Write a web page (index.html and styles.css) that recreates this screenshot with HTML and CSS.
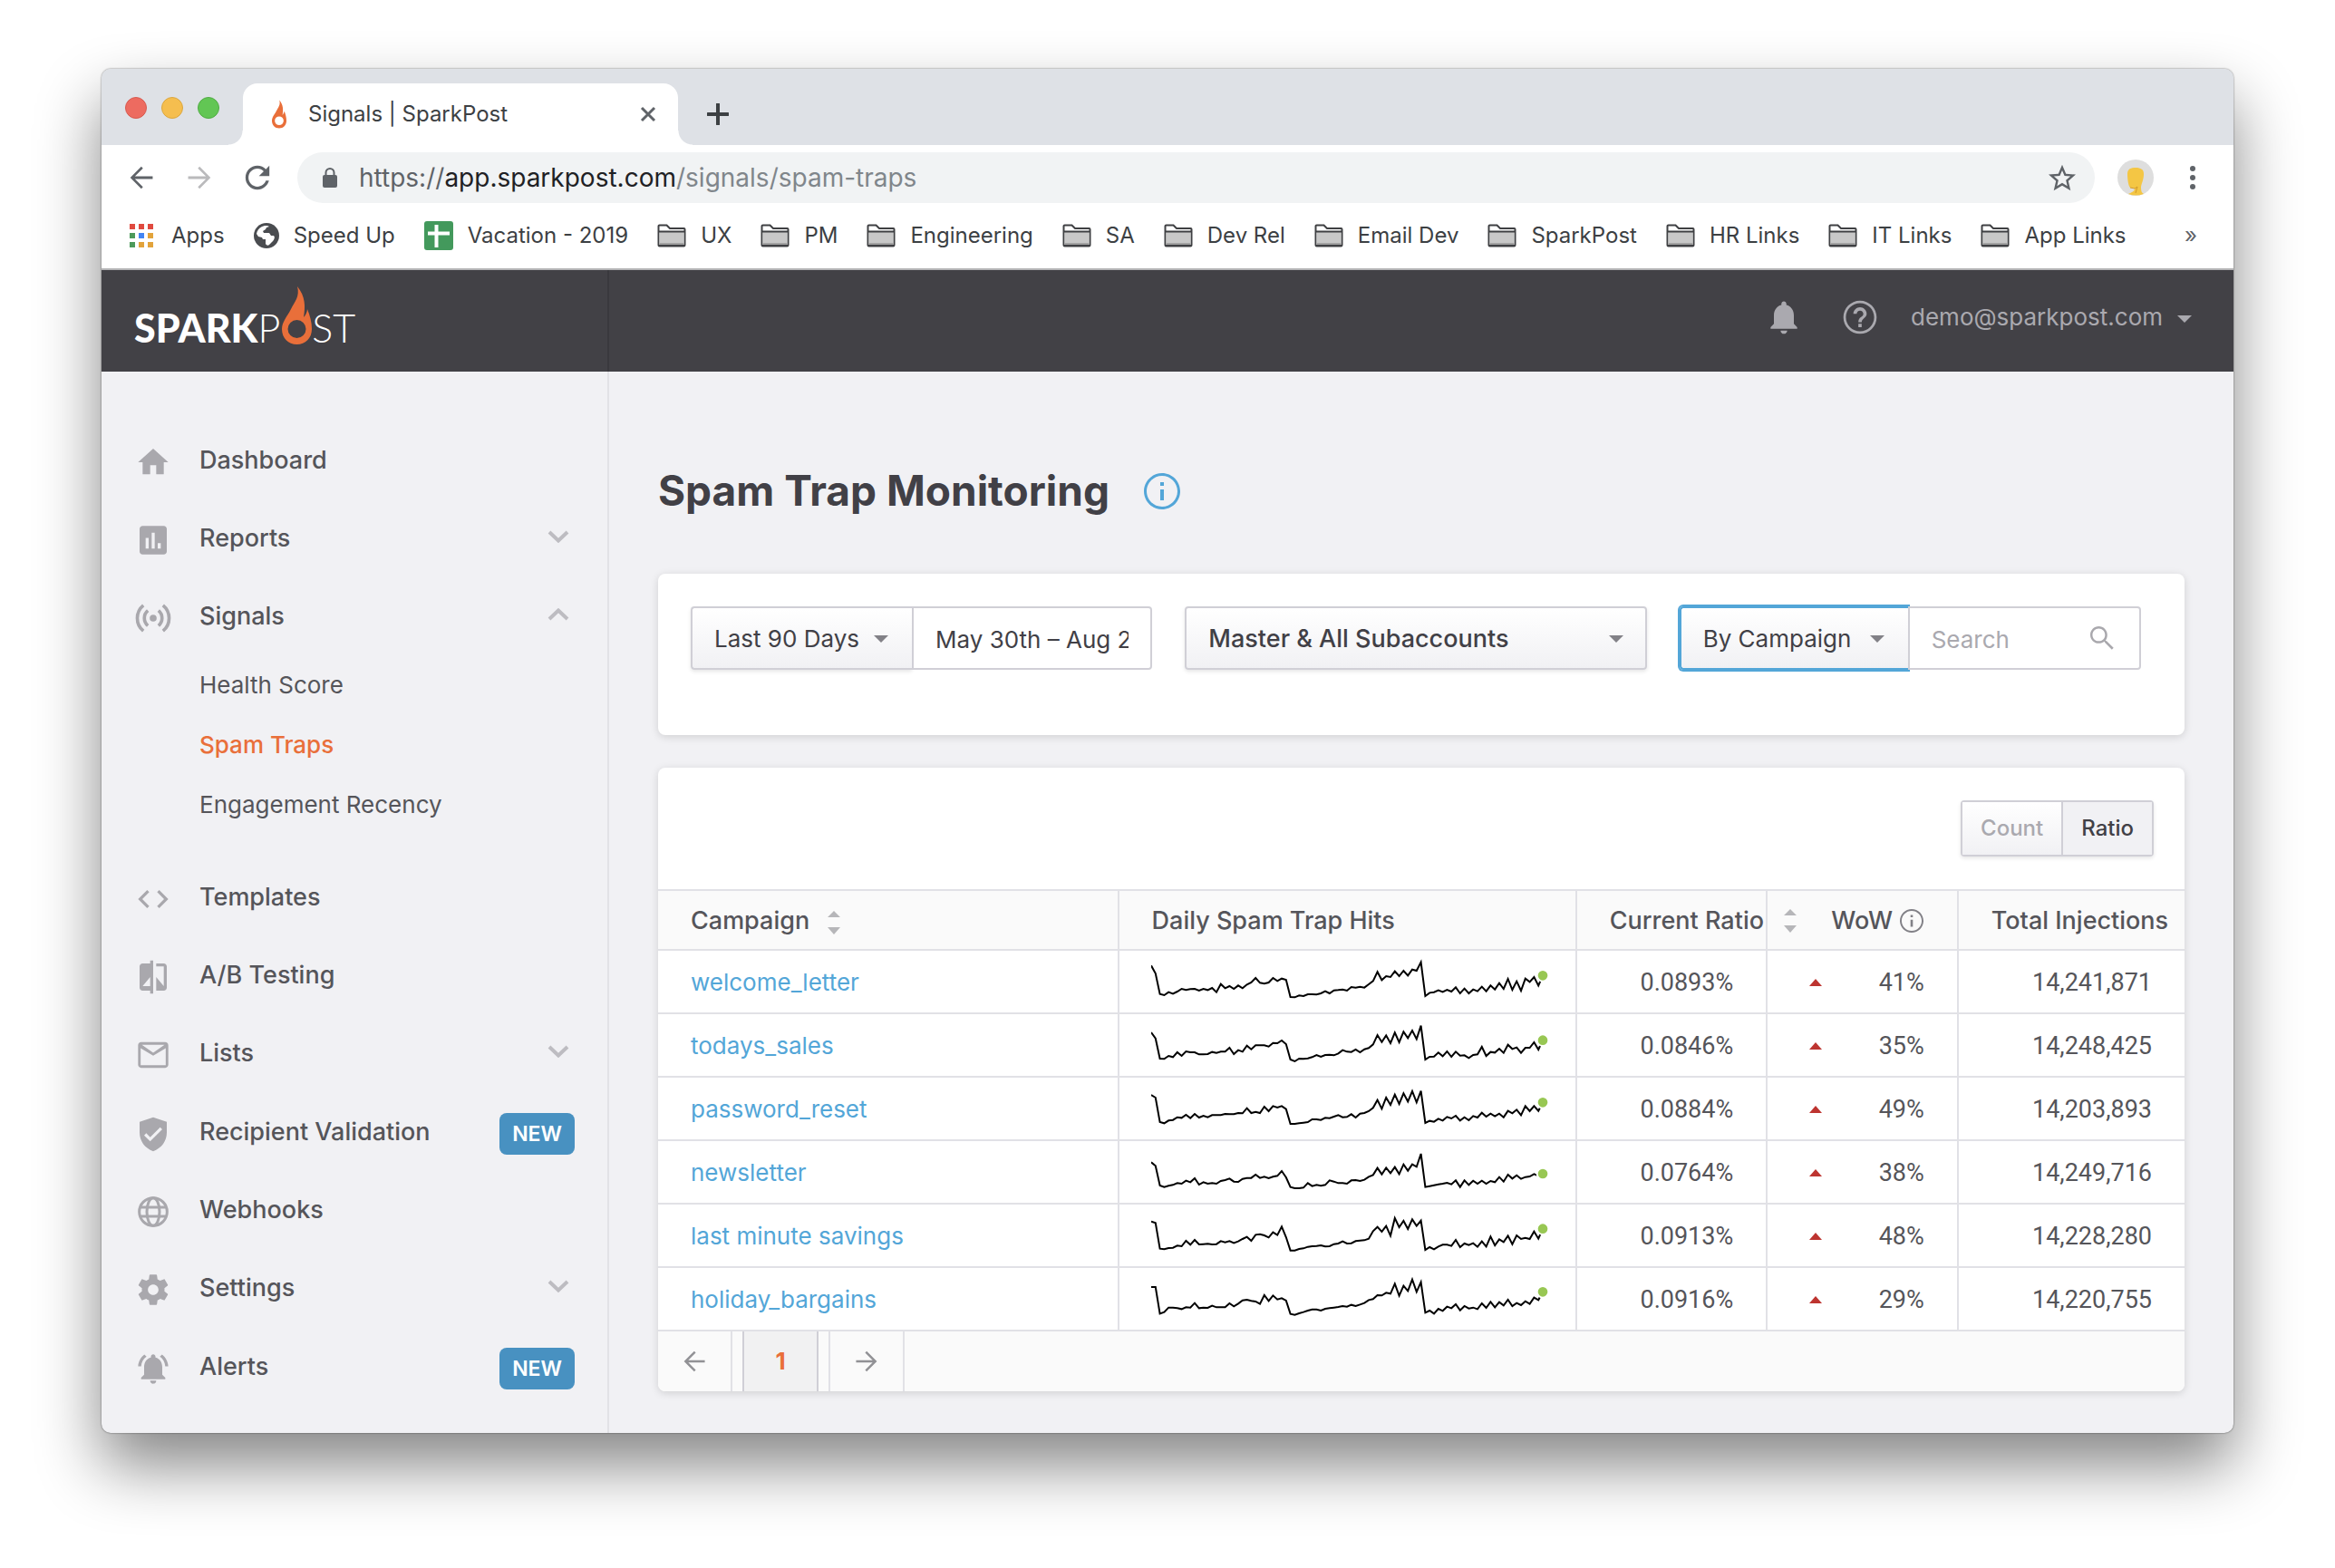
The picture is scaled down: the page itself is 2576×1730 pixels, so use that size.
FILE: index.html
```html
<!DOCTYPE html>
<html lang="en">
<head>
<meta charset="utf-8">
<title>Signals | SparkPost</title>
<link rel="stylesheet" href="styles.css">
</head>
<body>
<svg class="sprite" aria-hidden="true">
  <symbol id="flame" viewBox="0 0 33 64"><path fill-rule="evenodd" d="M17 0C26 11 26 22 24 34C26 32 28 28 28 25C31 32 33 40 33 47C33 57 26 64 16.500 64C7 64 0 57 0 47C0 39 6 33 10 25C14 17 20 11 17 0ZM16.500 37A10 10 0 1 0 16.500 57A10 10 0 1 0 16.500 37Z"/></symbol>
  <symbol id="folder" viewBox="0 0 32 26"><path d="M1.500 23.500V2.500a1 1 0 0 1 1-1h8l3.500 3.500h15.500a1 1 0 0 1 1 1v17.500a1 1 0 0 1-1 1h-27a1 1 0 0 1-1-1z" fill="#fff" stroke="#3f4043" stroke-width="2"/><path d="M2.500 9h27v14h-27z" fill="#c8c8c8"/><path d="M2.500 21h27v2h-27z" fill="#a2a2a2"/><path d="M2 8.500h28M2 24h28" stroke="#3f4043" stroke-width="2"/></symbol>
  <symbol id="caret" viewBox="0 0 16 8"><path d="M0 0h16L8 8z"/></symbol>
  <symbol id="sort" viewBox="0 0 14 26"><path d="M7 0l7 7H0zM0 18h14l-7 8z"/></symbol>
  <symbol id="up" viewBox="0 0 14 8"><path d="M7 0l7 8H0z"/></symbol>
  <symbol id="chevron" viewBox="0 0 24 14"><path d="M2 2l10 9.500L22 2" fill="none" stroke="#bdbcc1" stroke-width="4"/></symbol>
  <symbol id="info" viewBox="2 2 20 20"><path d="M11 17h2v-6h-2v6zm1-15C6.480 2 2 6.480 2 12s4.480 10 10 10 10-4.480 10-10S17.520 2 12 2zm0 18.500c-4.700 0-8.500-3.800-8.500-8.500s3.800-8.500 8.500-8.500 8.500 3.800 8.500 8.500-3.800 8.500-8.500 8.500zM11 9h2V7h-2v2z"/></symbol>
  <symbol id="arrow" viewBox="3 3 18 18"><path d="M20 11.100H7.400l5.700-5.700L11.900 4.200l-7.800 7.800 7.800 7.800 1.200-1.200L7.400 12.900H20z"/></symbol>
</svg>

<div class="window">
  <div class="tabstrip">
    <div class="lights"><i class="light red"></i><i class="light yellow"></i><i class="light green"></i></div>
    <div class="tab">
      <svg class="favicon"><use href="#flame"/></svg>
      <span class="tab-title">Signals | SparkPost</span>
      <button class="tab-close" aria-label="Close tab"><svg width="18" height="18" viewBox="0 0 18 18"><path d="M2 2l14 14M16 2L2 16" stroke="#5f6368" stroke-width="3"/></svg></button>
    </div>
    <button class="new-tab" aria-label="New tab"><svg width="24" height="24" viewBox="0 0 24 24"><path d="M12 1v22M1 12h22" stroke="#3c4043" stroke-width="4" stroke-linecap="round"/></svg></button>
  </div>

  <div class="toolbar">
    <button aria-label="Back"><svg class="tool-icon" fill="#5f6368"><use href="#arrow"/></svg></button>
    <button aria-label="Forward"><svg class="tool-icon flip" fill="#bababc"><use href="#arrow"/></svg></button>
    <button aria-label="Reload"><svg width="28" height="28" viewBox="3.500 3.500 17 17" fill="#5f6368"><path d="M17.650 6.350C16.200 4.900 14.210 4 12 4c-4.420 0-7.990 3.580-7.990 8s3.570 8 7.990 8c3.730 0 6.840-2.550 7.730-6h-2.080c-.82 2.330-3.040 4-5.650 4-3.310 0-6-2.690-6-6s2.690-6 6-6c1.660 0 3.140.69 4.220 1.780L13 11h7V4l-2.350 2.350z"/></svg></button>
    <div class="omnibox">
      <svg width="16" height="22" viewBox="0 0 16 22"><rect y="8" width="16" height="14" rx="2" fill="#5f6368"/><path d="M3.500 9V5.500a4.500 4.500 0 0 1 9 0V9" fill="none" stroke="#5f6368" stroke-width="2"/></svg>
      <span class="url">https://<b>app.sparkpost.com</b><i>/signals/spam-traps</i></span>
      <button class="star" aria-label="Bookmark this page"><svg width="30" height="30" viewBox="2 1.500 20 20" fill="#5f6368"><path d="M22 9.240l-7.190-.62L12 2 9.190 8.630 2 9.240l5.460 4.730L5.820 21 12 17.270 18.180 21l-1.630-7.030L22 9.240zM12 15.400l-3.760 2.270 1-4.280-3.320-2.880 4.380-.38L12 6.100l1.710 4.040 4.380.38-3.320 2.880 1 4.280L12 15.400z"/></svg></button>
    </div>
    <button class="avatar" aria-label="Profile"><svg width="40" height="40" viewBox="0 0 40 40"><circle cx="20" cy="20" r="20" fill="#dedede"/><path d="M11 16C11 10 15 9 20 9C26 9 29 11 29 16C29 23 26 27 26 31C26 35 27 37 29 38Q20 41 12 38C16 36 19 35 19 32L14 31C12 29 11 22 11 16Z" fill="#f4c644"/><path d="M14 31l5 1 3-2-2 7" fill="none" stroke="#d39a2c" stroke-width="1"/></svg></button>
    <button aria-label="Menu"><svg width="6" height="26" viewBox="0 0 6 26" fill="#5f6368"><circle cx="3" cy="3" r="3"/><circle cx="3" cy="13" r="3"/><circle cx="3" cy="23" r="3"/></svg></button>
  </div>

  <nav class="bookmarks" aria-label="Bookmarks">
    <a href="#" class="apps"><svg width="26" height="26" viewBox="0 0 26 26"><path d="M0 0h6v6H0zM10 0h6v6h-6zM20 0h6v6h-6z" fill="#e04a3f"/><path d="M0 10h6v6H0zM0 20h6v6H0z" fill="#4d9a5b"/><path d="M10 20h6v6h-6zM20 20h6v6h-6zM20 10h6v6h-6z" fill="#e2a33b"/><path d="M10 10h6v6h-6z" fill="#4285f4"/></svg>Apps</a>
    <a href="#"><svg width="28" height="28" viewBox="0 0 28 28"><circle cx="14" cy="14" r="14" fill="#4a4c50"/><path d="M12 3c-5 1-8 4-9 9l2 3 4 1 1 2h3v5c1 2 3 2 4 1l3-3c2-2 4-5 2-7h-3l-2-3h-6l-1-2 3-2 1-2 3-1-2-1z" fill="#fff"/></svg>Speed Up</a>
    <a href="#"><svg width="32" height="32" viewBox="0 0 32 32"><rect width="32" height="32" rx="3" fill="#43995c"/><path d="M13.500 4v25M4 13.500h24" stroke="#fff" stroke-width="4"/></svg>Vacation - 2019</a>
    <a href="#"><svg class="folder"><use href="#folder"/></svg>UX</a>
    <a href="#"><svg class="folder"><use href="#folder"/></svg>PM</a>
    <a href="#"><svg class="folder"><use href="#folder"/></svg>Engineering</a>
    <a href="#"><svg class="folder"><use href="#folder"/></svg>SA</a>
    <a href="#"><svg class="folder"><use href="#folder"/></svg>Dev Rel</a>
    <a href="#"><svg class="folder"><use href="#folder"/></svg>Email Dev</a>
    <a href="#"><svg class="folder"><use href="#folder"/></svg>SparkPost</a>
    <a href="#"><svg class="folder"><use href="#folder"/></svg>HR Links</a>
    <a href="#"><svg class="folder"><use href="#folder"/></svg>IT Links</a>
    <a href="#"><svg class="folder"><use href="#folder"/></svg>App Links</a>
    <button class="more" aria-label="More bookmarks">»</button>
  </nav>

  <header class="topbar">
    <a href="#" class="brand" aria-label="SparkPost"><span class="brand-bold">SPARK</span><span class="brand-thin">P</span><svg class="brand-flame"><use href="#flame"/></svg><span class="brand-thin">ST</span></a>
    <div class="account">
      <button class="bell" aria-label="Notifications"><svg width="44" height="44" viewBox="0 0 24 24" fill="#aaa9af"><path d="M12 22c1.100 0 2-.9 2-2h-4c0 1.100.89 2 2 2zm6-6v-5c0-3.070-1.640-5.640-4.500-6.320V4c0-.83-.67-1.500-1.500-1.500s-1.500.67-1.500 1.500v.68C7.630 5.360 6 7.920 6 11v5l-2 2v1h16v-1l-2-2z"/></svg></button>
      <button aria-label="Help"><svg width="44" height="44" viewBox="0 0 24 24" fill="#aaa9af"><path d="M11 18h2v-2h-2v2zm1-16C6.480 2 2 6.480 2 12s4.480 10 10 10 10-4.480 10-10S17.520 2 12 2zm0 18.500c-4.700 0-8.500-3.800-8.500-8.500s3.800-8.500 8.500-8.500 8.500 3.800 8.500 8.500-3.800 8.500-8.500 8.500zm0-14.500c-2.210 0-4 1.790-4 4h2c0-1.100.9-2 2-2s2 .9 2 2c0 2-3 1.750-3 5h2c0-2.250 3-2.500 3-5 0-2.210-1.790-4-4-4z"/></svg></button>
      <button class="user">demo@sparkpost.com<svg class="caret"><use href="#caret"/></svg></button>
    </div>
  </header>

  <div class="app">
    <nav class="sidebar" aria-label="Main">
      <a href="#" class="nav-item"><svg class="nav-icon" viewBox="0 0 24 24"><path d="M10 20v-6h4v6h5v-8h3L12 3 2 12h3v8z"/></svg><span>Dashboard</span></a>
      <a href="#" class="nav-item"><svg class="nav-icon" viewBox="0 0 24 24"><path d="M19 2.500H5c-1.100 0-2 .9-2 2v15c0 1.100.9 2 2 2h14c1.100 0 2-.9 2-2v-15c0-1.100-.9-2-2-2zM9 17.500H7v-7h2v7zm4 0h-2V7h2v10.500zm4 0h-2V14h2v3.500z"/></svg><span>Reports</span><svg class="chevron"><use href="#chevron"/></svg></a>
      <a href="#" class="nav-item"><svg class="nav-icon" viewBox="0 0 24 24"><circle cx="12" cy="12" r="2.300"/><path d="M5.500 3.500a11 11 0 0 0 0 17M18.500 3.500a11 11 0 0 1 0 17M8.500 7a6.500 6.500 0 0 0 0 10M15.500 7a6.500 6.500 0 0 1 0 10" fill="none" stroke="#a9a8ad" stroke-width="2.200"/></svg><span>Signals</span><svg class="chevron open"><use href="#chevron"/></svg></a>
      <div class="sub-nav">
        <a href="#">Health Score</a>
        <a href="#" class="active" aria-current="page">Spam Traps</a>
        <a href="#">Engagement Recency</a>
      </div>
      <a href="#" class="nav-item"><svg class="nav-icon" viewBox="0 0 24 24"><path d="M9.400 16.600L4.800 12l4.600-4.600L8 6l-6 6 6 6 1.400-1.400zm5.200 0l4.600-4.600-4.600-4.600L16 6l6 6-6 6-1.400-1.400z"/></svg><span>Templates</span></a>
      <a href="#" class="nav-item"><svg class="nav-icon" viewBox="0 0 24 24"><path d="M10 3H5c-1.100 0-2 .9-2 2v14c0 1.100.9 2 2 2h5v2h2V1h-2v2zm0 15H5l5-6v6zm9-15h-5v2h5v13l-5-6v9h5c1.100 0 2-.9 2-2V5c0-1.100-.9-2-2-2z"/></svg><span>A/B Testing</span></a>
      <a href="#" class="nav-item"><svg class="nav-icon" viewBox="0 0 24 24"><path fill-rule="evenodd" d="M20 3.500H4c-1.100 0-2 .9-2 2v13c0 1.100.9 2 2 2h16c1.100 0 2-.9 2-2v-13c0-1.100-.9-2-2-2zm.3 15.300H3.700V7.500l8.300 4.900 8.300-4.900zM12 10.500L4.500 5.300h15z"/></svg><span>Lists</span><svg class="chevron"><use href="#chevron"/></svg></a>
      <a href="#" class="nav-item has-badge"><svg class="nav-icon" viewBox="0 0 24 24"><path fill-rule="evenodd" d="M12 1l9 3v7c0 6-3.500 10.500-9 12.500C6.500 21.500 3 17 3 11V4zm-2 16l8-8-1.400-1.400-6.600 6.600-2.600-2.600L6 13z"/></svg><span>Recipient Validation</span><em class="badge">NEW</em></a>
      <a href="#" class="nav-item"><svg class="nav-icon" viewBox="0 0 24 24"><g fill="none" stroke="#a9a8ad" stroke-width="1.800"><circle cx="12" cy="12" r="9.200"/><ellipse cx="12" cy="12" rx="4.200" ry="9.200"/><path d="M3.500 9h17M3.500 15h17"/></g></svg><span>Webhooks</span></a>
      <a href="#" class="nav-item"><svg class="nav-icon" viewBox="0 0 24 24"><path d="M19.430 12.980c.04-.32.07-.64.07-.98s-.03-.66-.07-.98l2.110-1.650c.19-.15.24-.42.12-.64l-2-3.460c-.12-.22-.39-.3-.61-.22l-2.490 1c-.52-.4-1.080-.73-1.690-.98l-.38-2.650C14.460 2.180 14.250 2 14 2h-4c-.25 0-.46.18-.49.42l-.38 2.650c-.61.25-1.170.59-1.690.98l-2.490-1c-.23-.09-.49 0-.61.22l-2 3.460c-.13.22-.07.49.12.64l2.110 1.650c-.04.32-.07.65-.07.98s.03.66.07.98l-2.110 1.650c-.19.15-.24.42-.12.64l2 3.460c.12.22.39.3.61.22l2.490-1c.52.4 1.080.73 1.690.98l.38 2.650c.03.24.24.42.49.42h4c.25 0 .46-.18.49-.42l.38-2.650c.61-.25 1.170-.59 1.690-.98l2.490 1c.23.09.49 0 .61-.22l2-3.460c.12-.22.07-.49-.12-.64l-2.110-1.650zM12 15.500c-1.930 0-3.500-1.570-3.500-3.500s1.570-3.500 3.500-3.500 3.500 1.570 3.500 3.500-1.570 3.500-3.500 3.500z"/></svg><span>Settings</span><svg class="chevron"><use href="#chevron"/></svg></a>
      <a href="#" class="nav-item has-badge"><svg class="nav-icon" viewBox="0 0 24 24"><path d="M7.580 4.080L6.150 2.650C3.750 4.480 2.170 7.300 2.030 10.500h2c.15-2.650 1.510-4.970 3.550-6.420zm12.390 6.420h2c-.15-3.200-1.730-6.020-4.120-7.850l-1.420 1.430c2.020 1.450 3.390 3.770 3.540 6.420zM18 11c0-3.070-1.640-5.640-4.500-6.320V4c0-.83-.67-1.500-1.500-1.500s-1.500.67-1.500 1.500v.68C7.630 5.360 6 7.920 6 11v5l-2 2v1h16v-1l-2-2v-5zm-6 11c.14 0 .27-.01.4-.04.65-.14 1.180-.58 1.440-1.180.1-.24.15-.5.15-.78h-4c.01 1.100.9 2 2.010 2z"/></svg><span>Alerts</span><em class="badge">NEW</em></a>
    </nav>

    <main class="main">
      <h1 class="title">Spam Trap Monitoring <button aria-label="About spam trap monitoring"><svg width="40" height="40" fill="#53a6d8"><use href="#info"/></svg></button></h1>

      <section class="card filters">
        <div class="group">
          <div class="select range"><select aria-label="Date range"><option>Last 90 Days</option></select><svg class="caret"><use href="#caret"/></svg></div>
          <input class="field" type="text" aria-label="Dates" value="May 30th – Aug 27th, 2018">
        </div>
        <div class="group">
          <div class="select account-select"><select aria-label="Subaccount"><option>Master &amp; All Subaccounts</option></select><svg class="caret"><use href="#caret"/></svg></div>
        </div>
        <div class="group">
          <div class="select facet focused"><select aria-label="Break down by"><option>By Campaign</option></select><svg class="caret"><use href="#caret"/></svg></div>
          <div class="search"><input class="field" type="text" aria-label="Search" placeholder="Search"><svg class="search-icon" viewBox="3 3 18 18"><path d="M15.500 14.200l-.9-.3C15.500 12.700 16 11.200 16 9.500 16 5.910 13.090 3 9.500 3S3 5.910 3 9.500 5.910 16 9.500 16c1.700 0 3.200-.5 4.400-1.400l.3.900 5.300 5.300 1.300-1.300zm-6 .1C6.800 14.300 4.700 12.200 4.700 9.500S6.800 4.700 9.500 4.700s4.800 2.100 4.800 4.800-2.100 4.800-4.800 4.800z"/></svg></div>
        </div>
      </section>

      <section class="card">
        <div class="card-tools">
          <div class="toggle"><button>Count</button><button class="on" aria-pressed="true">Ratio</button></div>
        </div>
        <table>
          <colgroup><col class="c-name"><col class="c-hits"><col class="c-num"><col class="c-num"><col></colgroup>
          <thead>
            <tr>
              <th>Campaign<svg class="sort after"><use href="#sort"/></svg></th>
              <th>Daily Spam Trap Hits</th>
              <th>Current Ratio</th>
              <th class="wow"><div class="wow-head"><svg class="sort"><use href="#sort"/></svg><span>WoW</span><svg class="hint"><use href="#info"/></svg></div></th>
              <th>Total Injections</th>
            </tr>
          </thead>
          <tbody>
            <tr><td><a href="#">welcome_letter</a></td><td class="spark"><svg viewBox="0 270 1320 204" data-hits="319,345,413,417,407,412,405,396,400,397,396,402,396,400,393,407,380,394,387,396,385,394,382,375,360,376,379,375,360,370,362,366,423,424,418,420,414,414,415,411,404,411,401,400,398,402,390,392,389,392,381,370,340,367,354,357,338,354,336,352,332,336,308,420,409,407,401,406,399,405,391,411,395,411,398,404,389,404,385,398,377,396,363,399,371,402,362,373,357,385,352"></svg></td><td class="num">0.0893%</td><td class="num"><div class="change"><svg><use href="#up"/></svg>41%</div></td><td class="num">14,241,871</td></tr>
            <tr><td><a href="#">todays_sales</a></td><td class="spark"><svg viewBox="0 480 1320 204" data-hits="540,560,627,628,618,622,606,618,603,606,606,613,613,612,605,608,604,604,591,612,599,604,584,596,583,583,583,587,575,576,567,579,630,636,627,628,626,622,615,621,615,614,616,610,599,604,605,597,606,596,592,580,549,572,550,576,541,573,538,559,534,562,518,630,621,620,607,619,603,621,604,617,616,625,615,613,588,618,605,607,594,608,581,595,590,608,591,591,573,597,566"></svg></td><td class="num">0.0846%</td><td class="num"><div class="change"><svg><use href="#up"/></svg>35%</div></td><td class="num">14,248,425</td></tr>
            <tr><td><a href="#">password_reset</a></td><td class="spark"><svg viewBox="0 -30 1320 204" data-hits="27,36,117,121,112,110,101,103,93,104,90,102,96,101,94,94,94,90,91,91,87,88,71,87,83,87,66,81,64,69,64,74,123,123,121,119,117,108,108,110,103,104,99,94,101,100,91,102,89,87,81,70,44,73,36,60,26,57,22,49,15,52,14,120,113,116,106,112,100,105,96,112,101,111,97,102,86,99,89,98,89,101,80,88,76,94,64,81,64,80,52"></svg></td><td class="num">0.0884%</td><td class="num"><div class="change"><svg><use href="#up"/></svg>49%</div></td><td class="num">14,203,893</td></tr>
            <tr><td><a href="#">newsletter</a></td><td class="spark"><svg viewBox="0 180 1320 204" data-hits="250,262,327,332,328,325,319,321,311,316,303,324,316,321,319,321,312,309,304,314,315,305,302,302,291,302,298,303,298,295,279,300,332,336,336,334,319,329,325,328,325,310,314,319,319,321,310,309,312,308,298,292,269,290,268,286,266,289,257,278,257,265,222,332,329,326,323,321,318,323,310,332,310,325,311,321,311,321,312,316,299,314,291,304,293,305,299,297,289,295,288"></svg></td><td class="num">0.0764%</td><td class="num"><div class="change"><svg><use href="#up"/></svg>38%</div></td><td class="num">14,249,716</td></tr>
            <tr><td><a href="#">last minute savings</a></td><td class="spark"><svg viewBox="0 390 1320 204" data-hits="446,451,536,538,534,533,526,528,510,523,507,522,521,520,522,521,511,515,511,517,512,504,497,510,490,488,492,499,482,491,463,498,542,542,537,535,530,528,527,525,529,528,521,519,512,519,518,511,509,508,503,478,464,480,461,493,435,465,444,471,439,461,443,540,531,538,529,523,523,527,507,531,519,524,518,530,512,529,496,525,505,514,493,521,492,504,500,504,479,503,470"></svg></td><td class="num">0.0913%</td><td class="num"><div class="change"><svg><use href="#up"/></svg>48%</div></td><td class="num">14,228,280</td></tr>
            <tr><td><a href="#">holiday_bargains</a></td><td class="spark"><svg viewBox="0 600 1320 204" data-hits="663,663,751,746,731,731,733,736,730,731,716,733,731,732,725,730,730,730,717,727,718,707,705,709,711,719,690,709,691,704,700,708,752,755,750,746,741,737,737,741,735,733,731,729,726,728,722,726,721,716,706,703,690,691,682,685,652,692,659,676,638,679,647,748,741,751,735,742,728,733,720,740,726,734,731,736,717,732,712,730,713,724,705,726,716,723,710,719,698,706,679"></svg></td><td class="num">0.0916%</td><td class="num"><div class="change"><svg><use href="#up"/></svg>29%</div></td><td class="num">14,220,755</td></tr>
          </tbody>
        </table>
        <nav class="pager" aria-label="Pages">
          <button class="prev" aria-label="Previous page"><svg><use href="#arrow"/></svg></button>
          <button class="current" aria-current="page">1</button>
          <button class="next" aria-label="Next page"><svg class="flip"><use href="#arrow"/></svg></button>
        </nav>
      </section>
    </main>
  </div>
</div>
<script src="sparklines.js"></script>
</body>
</html>
```
FILE: styles.css
```css
* { box-sizing: border-box; }
body {
  margin: 0;
  padding: 76px 112px 148px;
  background: #fff;
  color: #55555a;
  font: 400 26px/36px Inter, "Liberation Sans", sans-serif;
}
button, select, input { font: inherit; color: inherit; margin: 0; }
button { padding: 0; border: 0; background: none; display: flex; align-items: center; justify-content: center; }
a { color: inherit; text-decoration: none; }
svg { display: block; flex: none; }
.sprite { position: absolute; width: 0; height: 0; }
.flip { transform: scaleX(-1); }

.window {
  background: #f1f1f4;
  border-radius: 10px;
  overflow: hidden;
  box-shadow: 0 0 2px rgba(0, 0, 0, .6), 0 36px 70px rgba(0, 0, 0, .48);
}

/* Browser chrome */
.tabstrip { display: flex; align-items: flex-end; background: #dee1e6; padding-top: 16px; }
.lights { display: flex; gap: 16px; width: 156px; padding: 0 0 29px 26px; }
.light { width: 24px; height: 24px; border-radius: 50%; border: 1px solid; }
.red { background: #ed6b60; border-color: #d75a50; }
.yellow { background: #f5be4f; border-color: #dba73f; }
.green { background: #62c654; border-color: #50ac43; }
.tab {
  position: relative;
  display: flex;
  align-items: center;
  width: 480px;
  height: 68px;
  padding: 0 24px 0 32px;
  background: #fff;
  border-radius: 16px 16px 0 0;
}
.tab::before, .tab::after { content: ""; position: absolute; bottom: 0; width: 16px; height: 16px; }
.tab::before { left: -16px; background: radial-gradient(circle at 0 0, #dee1e6 15px, #fff 16px); }
.tab::after { right: -16px; background: radial-gradient(circle at 100% 0, #dee1e6 15px, #fff 16px); }
.favicon { width: 16px; height: 32px; fill: #e96f3a; }
.tab-title { flex: 1; padding-left: 24px; font-size: 24px; color: #3c4043; }
.new-tab { height: 68px; margin-left: 32px; }

.toolbar { display: flex; align-items: center; padding: 8px 40px 8px 30px; background: #fff; }
.toolbar > button + button { margin-left: 36px; }
.tool-icon { width: 28px; height: 28px; }
.omnibox {
  flex: 1;
  display: flex;
  align-items: center;
  gap: 24px;
  height: 56px;
  margin: 0 25px 0 30px;
  padding: 0 21px 0 28px;
  border-radius: 28px;
  background: #f1f3f4;
}
.url { flex: 1; font-size: 28px; color: #5f6368; }
.url b { font-weight: 400; color: #202124; }
.url i { font-style: normal; color: #80868b; }
.toolbar > .avatar + button { margin: 0 2px 0 40px; }

.bookmarks {
  display: flex;
  align-items: center;
  gap: 32px;
  padding: 12px 40px 20px 31px;
  background: #fff;
  border-bottom: 2px solid #b4b4b6;
  font-size: 24px;
  line-height: 32px;
  color: #3c4043;
  white-space: nowrap;
}
.bookmarks a { display: flex; align-items: center; gap: 16px; }
.bookmarks .apps { gap: 20px; }
.folder { width: 32px; height: 26px; }
.more { margin-left: auto; color: #5f6368; }

/* Product header */
.topbar { display: flex; min-height: 112px; background: #424146; color: #aaa9af; }
.brand { display: flex; align-items: flex-end; width: 560px; padding: 0 0 30px 36px; border-right: 2px solid #3a393e; color: #fff; font: 43px/42px Lato, sans-serif; }
.brand span { height: 39px; }
.brand-bold { font-weight: 900; }
.brand-thin { font-weight: 300; }
.brand-flame { width: 33px; height: 64px; margin-left: 2px; fill: #e96f3a; }
.account { flex: 1; display: flex; align-items: center; justify-content: flex-end; gap: 34px; padding: 0 46px 8px 0; }
.bell { margin-right: 6px; }
.caret { width: 16px; height: 8px; fill: #828187; }
.user { gap: 16px; }
.user .caret { margin-top: 4px; fill: #aaa9af; }

.app { display: grid; grid-template-columns: 560px 1fr; }

/* Sidebar */
.sidebar { padding: 55px 0 28px; border-right: 2px solid #e2e2e6; }
.nav-item { display: flex; align-items: center; padding: 20px 36px 20px 37px; font-size: 27px; font-weight: 500; line-height: 46px; }
.nav-item span { flex: 1; padding-left: 31px; }
.has-badge { padding-top: 19px; padding-bottom: 18px; }
.nav-icon { width: 40px; height: 40px; margin-top: 4px; fill: #a9a8ad; }
.chevron { width: 24px; height: 14px; margin: 0 6px 4px 0; }
.open { transform: scaleY(-1); }
.badge { margin-top: 4px; padding: 0 14px; border-radius: 8px; background: #4891c1; color: #fff; font-size: 23px; font-style: normal; font-weight: 600; }
.sub-nav { padding-bottom: 26px; }
.sub-nav a { display: block; padding: 15px 0 15px 108px; }
.sub-nav .active { color: #e96f3a; font-weight: 500; }

/* Page */
.main { padding: 101px 54px 46px; min-width: 0; }
.title { display: flex; align-items: center; gap: 38px; margin: 0 0 62px; font-size: 46px; line-height: 60px; font-weight: 700; color: #414046; }
.title svg { margin-top: 2px; }
.card { margin-bottom: 36px; background: #fff; border-radius: 8px; box-shadow: 0 2px 10px rgba(0, 0, 0, .14); overflow: hidden; }
.card:last-child { margin-bottom: 0; }
.filters { display: flex; gap: 36px; padding: 36px 48px 72px 36px; color: #414046; }
.group { flex: 1; display: flex; min-width: 0; }
.select { position: relative; flex: none; }
.select select {
  appearance: none;
  display: block;
  width: 100%;
  height: 70px;
  padding: 2px 0 0 24px;
  border: 2px solid #d0cfd6;
  border-radius: 4px;
  outline: none;
  background: linear-gradient(#fff, #f1f1f4);
  box-shadow: 0 2px 4px rgba(0, 0, 0, .1);
}
.select .caret { position: absolute; top: 32px; right: 26px; pointer-events: none; }
.range { width: 244px; }
.facet { width: 252px; }
.range select, .facet select { border-right: 0; border-radius: 4px 0 0 4px; }
.account-select { flex: 1; }
.account-select select { font-size: 27px; font-weight: 500; }
.focused select { box-shadow: 0 0 0 2px #53a6d8; border-color: #53a6d8; }
.field { flex: 1; width: 100%; min-width: 0; height: 70px; padding: 2px 24px 0; border: 2px solid #d0cfd6; border-radius: 0 4px 4px 0; background: #fff; position: relative; }
.field::placeholder { color: #aaa9af; opacity: 1; }
.search { position: relative; flex: 1; min-width: 0; }
.search-icon { position: absolute; top: 22px; right: 30px; width: 26px; height: 26px; fill: #a9a8ad; }

.card-tools { display: flex; justify-content: flex-end; padding: 36px 34px; }
.toggle { display: flex; border: 2px solid #d0cfd6; border-radius: 4px; box-shadow: 0 2px 4px rgba(0, 0, 0, .1); font-size: 24px; line-height: 58px; }
.toggle button { padding: 0 20px; font-weight: 500; color: #aaa9af; background: linear-gradient(#fff, #f1f1f4); }
.toggle .on { border-left: 2px solid #d0cfd6; color: #414046; background: #f1f1f4; }

table { width: 100%; table-layout: fixed; border-spacing: 0; }
.c-name { width: 30.200%; }
.c-hits { width: 30%; }
.c-num { width: 12.500%; }
th, td { height: 70px; padding: 2px 36px 0; border-right: 2px solid #e1e1e6; border-bottom: 2px solid #e1e1e6; text-align: left; white-space: nowrap; }
th { height: 68px; border-top: 2px solid #e1e1e6; background: #fafafa; font-size: 27px; font-weight: 500; }
th:last-child, td:last-child { border-right: 0; }
td a { color: #53a6d8; }
.num { text-align: right; font-family: Roboto, "Liberation Sans", sans-serif; font-size: 27px; }
.sort { width: 14px; height: 26px; fill: #b6b6b9; }
.after { display: inline-block; margin-left: 20px; vertical-align: middle; }
.wow { padding: 2px 0 0 18px; }
.wow-head { display: flex; align-items: center; }
.wow-head span { padding: 0 8px 0 38px; }
.hint { width: 26px; height: 26px; fill: #828187; }
.spark { padding: 0 0 0 35px; }
.spark svg { width: 440px; height: 68px; }
.spark polyline { fill: none; stroke: #000; stroke-width: 6; }
.spark circle { fill: #98c753; stroke: #fff; stroke-width: 6; }
.change { display: flex; align-items: center; justify-content: space-between; padding-left: 10px; }
.change svg { width: 14px; height: 8px; fill: #bd3430; }

.pager { display: flex; gap: 11px; background: #fafafa; }
.pager button { width: 84px; height: 66px; border: 2px solid #e1e1e6; border-width: 0 2px; }
.pager svg { width: 26px; height: 26px; fill: #919195; }
.pager .prev { width: 82px; border-left: 0; }
.pager .current { border-color: #d0cfd6; background: #f1f1f2; color: #e96f3a; font-weight: 700; }
```
FILE: sparklines.js
```js
// Draws each row's daily hits as a line, with a dot on the latest day.
const STEP = 14.4;
const NS = "http://www.w3.org/2000/svg";
document.querySelectorAll("svg[data-hits]").forEach((svg) => {
  const hits = svg.dataset.hits.split(",").map(Number);
  const line = document.createElementNS(NS, "polyline");
  line.setAttribute("points", hits.map((y, i) => `${(i * STEP).toFixed(1)},${y}`).join(" "));
  const dot = document.createElementNS(NS, "circle");
  dot.setAttribute("cx", (hits.length - 1) * STEP);
  dot.setAttribute("cy", hits[hits.length - 1]);
  dot.setAttribute("r", 19);
  svg.append(line, dot);
});
```
